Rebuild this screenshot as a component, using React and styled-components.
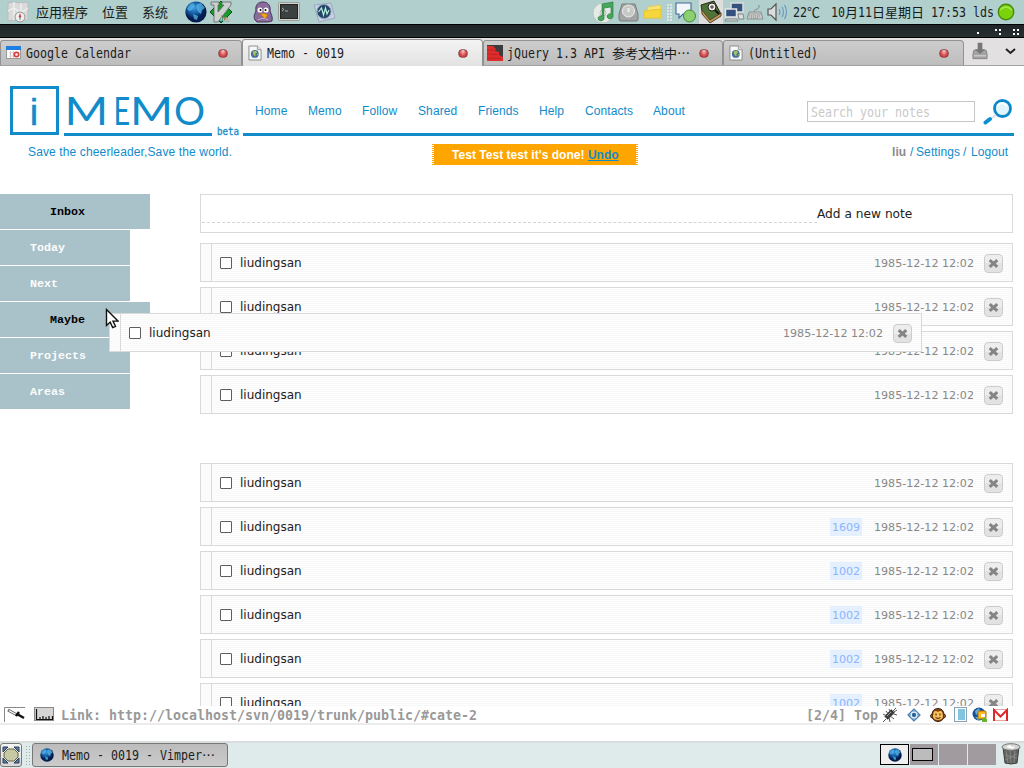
import React from 'react';
import styled, { createGlobalStyle, css } from 'styled-components';

const Global = createGlobalStyle`
  *{box-sizing:border-box}
  html,body{margin:0;padding:0;background:#fff;overflow:hidden}
  a{color:inherit;text-decoration:none}
`;
const blue = '#118bca';

const Desktop = styled.div`
  position:relative;width:1024px;height:768px;overflow:hidden;display:flex;flex-direction:column;
  font-family:"Liberation Sans","Noto Sans CJK SC",sans-serif;font-size:12px;background:#fff;
`;
const mono = css`font-family:"DejaVu Sans Mono","Noto Sans CJK SC",monospace;`;
/* Narrow monospace label: glyphs are squeezed to a 7px advance. */
const Narrow = styled.span`
  ${mono} display:block;white-space:pre;width:${p => p.$w}px;font-size:14px;line-height:20px;color:${p => p.$c || '#1c1c1c'};
  flex:none;
  & > span{display:inline-block;transform:scaleX(.8305);transform-origin:0 50%}
`;
const Label = ({ w, c, children }) => <Narrow $w={w} $c={c}><span>{children}</span></Narrow>;
const Cjk = styled.span`font:13px/20px "Noto Sans CJK SC",sans-serif;white-space:nowrap;color:#161a1a;flex:none;width:${p => p.$w}px;`;
const Icon = styled.svg`display:block;flex:none;margin-left:${p => p.$l || 0}px;`;

const TopPanel = styled.header`height:24px;flex:none;background:#b0cfcd;display:flex;align-items:center;padding-left:7px;`;
const Spacer = styled.div`width:${p => p.$w}px;flex:none;`;
const TitleBar = styled.div`
  height:14px;flex:none;background:linear-gradient(#1e2526,#293032);border-top:1px solid #000;border-bottom:1px solid #000;
  display:flex;justify-content:flex-end;padding-right:5px;align-items:center;
`;
const TabBar = styled.nav`height:28px;flex:none;background:#e3e0e1;display:flex;align-items:flex-end;border-bottom:1px solid #a2a2a2;`;
const Tab = styled.div`
  width:${p => p.$w}px;height:${p => p.$active ? 27 : 25}px;display:flex;align-items:center;padding:0 0 0 ${p => p.$pad || 5}px;
  border:1px solid #929292;border-bottom:0;border-radius:3px 4px 0 0;margin-bottom:${p => p.$active ? -1 : 0}px;
  background:${p => p.$active ? 'linear-gradient(#f4f4f4,#e2e2e2)' : 'linear-gradient(#cdcdcd,#bdbdbd)'};
`;
const Close = styled.i`
  width:10px;height:9px;border-radius:5px;border:1px solid #94474b;margin-left:auto;margin-right:${p => p.$r || 13}px;
  background:radial-gradient(ellipse at 50% 15%,#f0b5b5 10%,#dd6565 45%,#c43237 75%,#d9605f);
`;

const Page = styled.main`height:640px;flex:none;overflow:hidden;`;
const Header = styled.div`height:70px;display:flex;padding:20px 10px 0;`;
const Logo = styled.svg`width:233px;height:50px;display:block;flex:none;`;
const HeadRight = styled.div`width:771px;height:50px;border-bottom:3px solid ${blue};display:flex;padding-left:12px;`;
const Nav = styled.nav`display:grid;grid-template-columns:53px 54px 56px 60px 61px 46px 68px 154px;line-height:50px;color:${blue};letter-spacing:.1px;`;
const Search = styled.div`
  width:168px;height:21px;margin-top:15px;border:1px solid #c5c5c5;padding-left:3px;line-height:0;
`;
const SubHeader = styled.div`height:58px;display:flex;padding:8px 0 0 28px;line-height:16px;color:${blue};`;
const Tagline = styled.div`width:404px;letter-spacing:.13px;`;
const Notice = styled.div`
  width:206px;height:21px;background:linear-gradient(90deg,transparent 2px,#ffa500 2px 204px,transparent 204px),repeating-linear-gradient(#ffa500 0 1px,#fff 1px 2px);
  color:#fff;font-weight:bold;line-height:22px;padding-left:20px;white-space:nowrap;letter-spacing:.03px;
  a{color:${blue};text-decoration:underline}
`;
const User = styled.div`margin-left:254px;white-space:pre;letter-spacing:.1px;display:grid;grid-template-columns:18px 6px 47px 8px 40px;b{color:#8b8b8b}`;
const Body = styled.div`display:flex;`;
const Side = styled.nav`width:200px;display:flex;flex-direction:column;gap:1px;`;
const SideItem = styled.a`
  height:35px;width:${p => p.$on ? 150 : 130}px;padding-left:${p => p.$on ? 50 : 30}px;background:#a9c1c9;
  font:bold 11.67px/37px "Liberation Mono",monospace;color:${p => p.$on ? '#000' : '#fbfdfd'};
`;
const Notes = styled.section`width:813px;`;
const AddBox = styled.div`
  height:39px;border:1px solid #d9d9d9;margin-bottom:10px;display:flex;padding-left:1px;
  font:12.2px/39px "DejaVu Sans",sans-serif;color:#222;
`;
const Entry = styled.div`width:615px;height:28px;border-bottom:1px dashed #d5d5d5;`;
const Row = styled.div`
  height:39px;width:813px;margin-bottom:5px;border:1px solid #d9d9d9;display:flex;align-items:center;
  font:12px/18px "DejaVu Sans",sans-serif;color:#222;
  background:repeating-linear-gradient(#fefefe 0 1px,#f8f8f8 1px 2px);
  ${p => p.$dragged && css`position:absolute;left:109px;top:313px;`}
`;
const Gap = styled.div`height:44px;`;
const Handle = styled.i`width:11px;height:37px;background:#fbfbfb;border-right:1px solid #d9d9d9;`;
const Check = styled.i`width:12px;height:12px;border:1px solid #5e5e5e;border-radius:1px;background:#fff;margin:1px 8px 0;`;
const Name = styled.span`flex:1;`;
const Count = styled.span`
  width:32px;height:18px;line-height:20px;background:#e5f0fe;color:#8cb4ff;font-size:11.1px;text-align:center;margin-right:12px;
`;
const Time = styled.time`font-size:11.1px;line-height:18px;padding-top:2px;color:#888;width:100px;white-space:nowrap;`;
const Del = styled.button`
  width:19px;height:19px;margin:2px 9px 0 10px;padding:0;border:1px solid #ccc;border-radius:4px;
  background:linear-gradient(#ededed 50%,#e2e2e2 50%);display:flex;align-items:center;justify-content:center;
`;

const Status = styled.div`height:19px;flex:none;border-bottom:2px solid #ececec;display:flex;align-items:center;padding-left:4px;background:#fff;`;
const StatusText = styled.span`
  ${mono} display:block;flex:none;font-size:14px;font-weight:bold;color:#999;white-space:pre;width:${p => p.$w}px;line-height:18px;
  & > span{display:inline-block;transform:scaleX(.949);transform-origin:0 50%}
`;
const Bottom = styled.footer`
  height:27px;margin-top:auto;flex:none;background:#dfeaea;border-top:2px solid #dadddd;display:flex;align-items:flex-start;
`;
const PanelButton = styled.div`
  width:${p => p.$w}px;height:24px;border:1px solid #777;border-radius:3px;display:flex;align-items:center;flex:none;
  background:${p => p.$pressed ? 'linear-gradient(#bcbcbc,#cbcbcb)' : 'linear-gradient(#f6f6f6,#d8d8d8)'};
  padding-left:${p => p.$pressed ? 7 : 1}px;
  & > ${Narrow}{margin-left:8px}
`;
const Grip = styled.i`width:6px;height:20px;margin:2px 1px 0 3px;flex:none;background:radial-gradient(circle,#a5aeae 0.7px,transparent 1px) 0 0/3px 3px;`;
const Workspaces = styled.div`display:flex;gap:1px;width:118px;flex:none;`;
const Workspace = styled.div`
  width:${p => p.$on ? 29 : 28}px;height:21px;margin-top:1px;background:${p => p.$on ? '#efefef' : '#a19b9f'};
  outline:${p => p.$on ? '1px solid #000' : 'none'};outline-offset:-1px;display:flex;align-items:center;justify-content:center;
`;
const MiniWindow = styled.i`width:21px;height:13px;border:1px solid #000;background:#bcbcbc;margin-right:3px;`;

const Globe = ({ s = 22, l }) => (
  <Icon $l={l} width={s} height={s} viewBox="0 0 22 22">
    <defs><radialGradient id={`globe${s}`} cx=".4" cy=".3"><stop offset="0" stopColor="#3f9be0" /><stop offset=".6" stopColor="#125aa0" /><stop offset="1" stopColor="#051c50" /></radialGradient></defs>
    <circle cx="11" cy="11" r="10.6" fill={`url(#globe${s})`} />
    <path d="M2 8Q4 3 8 2l2 3-3 4-3 1zM12 3l4-1 4 5-3 2-1 4-3-2-2-5zM8 13l5 2-1 4-3-1z" fill="#56b4e2" opacity=".75" />
  </Icon>
);
const PageIcon = () => (
  <Icon width="14" height="16" viewBox="0 0 15 17">
    <path d="M1 1h9l4 4v11H1z" fill="#f8f8f8" stroke="#858a86" /><path d="M10 1v4h4" fill="#ddd" stroke="#999" />
    <circle cx="7.3" cy="9.5" r="4.2" fill="#476f9d" /><path d="M5 7l3-1 2 2-2 1v3l-2-1zM9 11l2-2v2z" fill="#abc554" />
  </Icon>
);
const Cross = () => (
  <svg width="11" height="11" viewBox="0 0 11 11"><path d="M1.7 2.2l7.6 6.6M9.300 2.2L1.700 8.8" stroke="#858585" strokeWidth="3.1" /></svg>
);

function Note({ count, dragged }) {
  return (
    <Row $dragged={dragged}>
      <Handle /><Check /><Name>liudingsan</Name>
      {count && <Count>{count}</Count>}
      <Time>1985-12-12 12:02</Time><Del><Cross /></Del>
    </Row>
  );
}

function Top() {
  return (
    <TopPanel>
      <Icon width="22" height="22" viewBox="0 0 22 22">
        <path d="M1 2l6-1 7 1 7-1v18l-7 1-7-1-6 1z" fill="#d9dad9" stroke="#b9bcbc" /><path d="M7 1v18M14 2v17M1 10l6-3 7 5 7-5" stroke="#f3f3f3" fill="none" strokeWidth="1.2" />
        <circle cx="13" cy="16" r="5" fill="#eee" stroke="#8d9797" /><path d="M13 12l1.3 4h-2.6z" fill="#d33" /><path d="M13 20l1-4h-2z" fill="#888" />
      </Icon>
      <Spacer $w={7} /><Cjk $w={66}>应用程序</Cjk><Cjk $w={40}>位置</Cjk><Cjk $w={43}>系统</Cjk>
      <Globe />
      <Icon $l={2} width="24" height="24" viewBox="0 0 24 24">
        <path d="M12 1l11 11-11 11L1 12z" fill="#169c2b" stroke="#064d11" />
        <path d="M2 2h8v3H9v7l6-7h-2V2h9v3L9 22H5V5H2z" fill="#ccd0cf" stroke="#626766" strokeWidth=".8" />
        <text x="11" y="21" fontFamily="Liberation Serif" fontStyle="italic" fontWeight="bold" fontSize="9" fill="#f5f5f5" stroke="#333" strokeWidth=".25">im</text>
      </Icon>
      <Icon $l={19} width="22" height="22" viewBox="0 0 22 22">
        <path d="M3 19C1 15 3 13 4 10 3 4 6 1 11 1s8 4 7 9c1 3 3 6 2 10l-4 1H5z" fill="#896b9c" stroke="#4b335c" />
        <ellipse cx="8" cy="9" rx="2.5" ry="2.6" fill="#fff" /><ellipse cx="14" cy="9" rx="2.5" ry="2.6" fill="#fff" /><circle cx="8.5" cy="9" r="1" /><circle cx="13.5" cy="9" r="1" />
        <path d="M8 13l4-1 4 2-3 4z" fill="#f2a31d" stroke="#a86208" strokeWidth=".6" /><path d="M6 19c3-2 7-2 10 0" fill="none" stroke="#c6b0d2" />
      </Icon>
      <Icon $l={4} width="22" height="20" viewBox="0 0 22 20">
        <rect x=".5" y=".5" width="21" height="18" rx="1" fill="#d4d5d2" stroke="#9b9d99" /><rect x="2.5" y="2.5" width="17" height="14" fill="#3b4040" stroke="#222" /><path d="M4 6l2 1.5L4 9M7 9h3" stroke="#aaa" fill="none" />
      </Icon>
      <Icon $l={13} width="23" height="21" viewBox="0 0 23 21">
        <path d="M1 3l17-2 4 15-16 4z" fill="#c8d0e2" stroke="#9ba9c5" /><circle cx="11" cy="9.5" r="7" fill="#214765" stroke="#8b9bb4" />
        <path d="M5.5 10l3-4 2 7 2-7 1.5 6 2-4" stroke="#b8efe0" strokeWidth="1.2" fill="none" />
      </Icon>
      <Spacer $w={256} />
      <Icon width="23" height="23" viewBox="0 0 23 23">
        <circle cx="11" cy="12" r="10" fill="#e6eae6" stroke="#b9c6c3" /><circle cx="11" cy="12" r="3" fill="#fff" stroke="#bbb" />
        <path d="M10 3l11-2v14a3 2.500 0 1 1-2-2V6l-7 1v10a3 2.500 0 1 1-2-2z" fill="#47a85c" stroke="#207239" strokeWidth=".6" />
      </Icon>
      <Icon $l={3} width="21" height="20" viewBox="0 0 21 20">
        <path d="M4 2h13l3 10v5q0 2-2 2H3q-2 0-2-2v-5z" fill="#a2a5a3" stroke="#787c7a" /><circle cx="10.5" cy="9" r="6" fill="#c7c9c6" stroke="#eee" /><path d="M10.500 6v4" stroke="#eee" strokeWidth="2" />
      </Icon>
      <Icon $l={4} width="20" height="16" viewBox="0 0 20 16"><path d="M5 3l12-2 2 6-16 2z" fill="#f8e47a" stroke="#e6cd52" /><path d="M1 7l17-2v9H1z" fill="#f5d63c" stroke="#e8c52e" /></Icon>
      <Icon $l={3} width="7" height="19"><path d="M2 1v18M5 1v18" stroke="#dae9e7" strokeWidth="2" strokeDasharray="2 1" /></Icon>
      <Icon $l={2} width="22" height="22" viewBox="0 0 22 22">
        <path d="M1 2h15v11H8l-4 4v-4H1z" fill="#f2f6fa" stroke="#3e6a9b" strokeWidth="1.1" /><circle cx="14.500" cy="15" r="6" fill="#8bcf70" stroke="#438b32" />
      </Icon>
      <Icon $l={2} width="24" height="24" viewBox="0 0 24 24">
        <rect width="24" height="24" fill="#dfdede" /><path d="M2 5l13-4 7 13-11 7L3 11z" fill="#4d7337" stroke="#282e18" /><path d="M3 10l8 10 11-7v3l-11 7L3 14z" fill="#bf9960" stroke="#594525" />
        <circle cx="13" cy="7" r="4" fill="#f0f0e8" stroke="#222" /><path d="M16 10l4 4" stroke="#111" strokeWidth="2" /><path d="M11 7h4M13 5v4" stroke="#333" />
      </Icon>
      <Icon $l={1} width="21" height="21" viewBox="0 0 21 21">
        <rect x="7" y="1" width="12" height="9" fill="#34507d" stroke="#ddd" strokeWidth="1.5" /><rect x="1.500" y="7" width="11" height="8" fill="#34507d" stroke="#e5e5e5" strokeWidth="1.5" /><path d="M2 17h11l1 2H1zM14 12h5l1 5h-5z" fill="#ddd" stroke="#777" strokeWidth=".8" />
      </Icon>
      <Icon $l={1} width="18" height="17" viewBox="0 0 18 17"><path d="M8 8C8 4 14 7 13 1" fill="none" stroke="#888" /><path d="M3 8h12l2 7H1z" fill="#c7cac8" stroke="#8e9391" /><path d="M3.500 10h11M3 12h12M5 14h8" stroke="#7f8583" strokeDasharray="1 1" /></Icon>
      <Icon $l={3} width="22" height="20" viewBox="0 0 22 20"><path d="M1 7h3l5-5v16l-5-5H1z" fill="#ddd" stroke="#555" strokeWidth="1.2" /><path d="M12 7q2 3 0 6M15 5q3 5 0 10M17.500 3q4 7 0 14" fill="none" stroke="#709bbf" strokeWidth="1.2" /></Icon>
      <Spacer $w={4} /><Label w={14}>22</Label><Cjk $w={24}>℃</Cjk>
      <Label w={14}>10</Label><Cjk $w={13}>月</Cjk><Label w={14}>11</Label><Cjk $w={59}>日星期日</Cjk>
      <Label w={42}>17:53</Label><Label w={24}>lds</Label>
      <Icon width="18" height="18" viewBox="0 0 18 18"><circle cx="9" cy="9" r="7.700" fill="#7ad20d" stroke="#448b0b" strokeWidth="1.4" /><path d="M3 7q6-6 12 0" fill="none" stroke="#a8e851" strokeWidth="1.5" /></Icon>
    </TopPanel>
  );
}

export default function App() {
  return (
    <Desktop>
      <Global />
      <Top />
      <TitleBar>
        <svg width="42" height="10"><path d="M0 6h2v2H0zM18 3h2v2h-2zM22 3h2v2h-2zM22 7h2v2h-2zM36 3h2v2h-2zM40 3h2v2h-2zM36 7h2v2h-2zM40 7h2v2h-2z" fill="#fff" /></svg>
      </TitleBar>
      <TabBar>
        <Tab $w={242}>
          <Icon width="16" height="16" viewBox="0 0 16 16"><rect x=".5" y="1.500" width="14" height="12" fill="#fff" stroke="#999" /><rect x="0" y="1" width="15" height="4" fill="#1f7fe0" /><path d="M3 8h6M3 11h6M4.500 6v7M7.500 6v7" stroke="#ccc" /><circle cx="10.500" cy="9.500" r="2.200" fill="#fff" stroke="#d83c3c" strokeWidth="1.7" /></Icon>
          <Spacer $w={4} /><Label w={110}>Google Calendar</Label><Close />
        </Tab>
        <Tab $w={241} $active><PageIcon /><Spacer $w={5} /><Label w={110}>Memo - 0019</Label><Close $r={14} /></Tab>
        <Tab $w={240} $pad={3}>
          <Icon width="16" height="16" viewBox="0 0 16 16"><rect width="16" height="16" fill="#3c3c3c" /><path d="M0 1h6l3 3-1 2 4 1v3l4 2v4H0z" fill="#e02b2b" /><path d="M0 5h8M0 9l11 .5M0 13l14 .5" stroke="#b82525" /></Icon>
          <Spacer $w={4} /><Label w={105}>jQuery 1.3 API </Label><Cjk $w={78}>参考文档中⋯</Cjk><Close />
        </Tab>
        <Tab $w={241}><PageIcon /><Spacer $w={5} /><Label w={110}>(Untitled)</Label><Close $r={14} /></Tab>
        <Icon $l={8} width="16" height="24" viewBox="0 0 17 24"><path d="M2 9h13l1 4v5H1v-5z" fill="#a3a3a3" stroke="#858585" /><path d="M6 1h5v7h3l-5.500 5L3 8h3z" fill="#777" /><path d="M2 15h13" stroke="#ddd" /></Icon>
        <Icon $l={17} width="12" height="20"><path d="M1 4l4.500 4L10 4" fill="none" stroke="#222" strokeWidth="2" /></Icon>
      </TabBar>

      <Page>
        <Header>
          <Logo viewBox="0 0 233 50">
            <rect x="1.500" y="1.500" width="46" height="46" fill="#fff" stroke={blue} strokeWidth="3" />
            <text x="20" y="38.500" fontFamily="Liberation Sans" fontSize="36" fill={blue} stroke={blue} strokeWidth=".6">i</text>
            <g fontFamily="Lato" fontSize="38" fill={blue}>
              <text transform="translate(54.500 38.500) scale(1.24 1)">M</text>
              <text transform="translate(103.500 38.500) scale(.76 1)">E</text>
              <text transform="translate(120 38.500) scale(1.22 1)">M</text>
              <text transform="translate(164 38.500) scale(1.02 1)">O</text>
            </g>
            <path d="M54 48.500h148" stroke={blue} strokeWidth="3" />
            <text x="207" y="49" textLength="22" lengthAdjust="spacingAndGlyphs" fontFamily="DejaVu Sans Mono" fontSize="10.500" fill={blue} stroke={blue} strokeWidth=".3">beta</text>
          </Logo>
          <HeadRight>
            <Nav><a>Home</a><a>Memo</a><a>Follow</a><a>Shared</a><a>Friends</a><a>Help</a><a>Contacts</a><a>About</a></Nav>
            <Search><Label w={130} c="#c9c9c9">Search your notes</Label></Search>
            <Icon $l={8} width="30" height="28" viewBox="0 0 30 28" style={{ marginTop: 12 }}>
              <circle cx="19.500" cy="10.500" r="8" fill="#e2f5fd" stroke="#0b87cc" strokeWidth="2.800" /><path d="M14 8q5-6 10 0" stroke="#fff" strokeWidth="2" fill="none" />
              <path d="M13 17l-4 3" stroke="#dde" strokeWidth="2" /><path d="M7 21l-4.500 3.500" stroke="#0b8fd4" strokeWidth="4" strokeLinecap="round" />
            </Icon>
          </HeadRight>
        </Header>
        <SubHeader>
          <Tagline>Save the cheerleader,Save the world.</Tagline>
          <Notice>Test Test test it's done! <a>Undo</a></Notice>
          <User><b>liu</b><span>/</span><a>Settings</a><span>/</span><a>Logout</a></User>
        </SubHeader>
        <Body>
          <Side>
            <SideItem $on>Inbox</SideItem><SideItem>Today</SideItem><SideItem>Next</SideItem>
            <SideItem $on>Maybe</SideItem><SideItem>Projects</SideItem><SideItem>Areas</SideItem>
          </Side>
          <Notes>
            <AddBox><Entry />Add a new note</AddBox>
            <Note /><Note /><Note /><Note /><Gap /><Note />
            <Note count="1609" /><Note count="1002" /><Note count="1002" /><Note count="1002" /><Note count="1002" />
          </Notes>
        </Body>
      </Page>

      <Status>
        <Icon width="22" height="15" viewBox="0 0 22 15"><path d="M.500 15V.500H21" fill="none" stroke="#888" /><path d="M4 3l9 5" stroke="#666" strokeWidth="3" /><path d="M5 3.500l7 4" stroke="#fff" strokeWidth="1.200" /><path d="M12 9l3-4M13 7l7 4" stroke="#111" strokeWidth="2.500" /></Icon>
        <Icon $l={8} width="21" height="15" viewBox="0 0 21 15"><rect x=".500" y=".500" width="19" height="13" fill="#d5d5d5" stroke="#888" /><path d="M2.500 2v10.500h16V9M6 12v-2M9 12V9M12 12v-2M15 12v-3" stroke="#111" fill="none" strokeWidth="1.200" /></Icon>
        <Spacer $w={6} /><StatusText $w={745}><span>Link: http://localhost/svn/0019/trunk/public/#cate-2</span></StatusText><StatusText $w={76}><span>[2/4] Top</span></StatusText>
        <Icon width="16" height="16" viewBox="0 0 16 16"><path d="M4 11l7-7" stroke="#333" strokeWidth="5" /><path d="M1 7l6 3 1 5M4 4l3 4 5 4M7 2l2 4 6 2M1 15l3-3M11 4l3-3M12 5l3-2" stroke="#555" fill="none" /><path d="M5 9l4-4" stroke="#aaa" /></Icon>
        <Icon $l={9} width="14" height="14" viewBox="0 0 14 14"><path d="M7 .700L13.300 7 7 13.300.700 7z" fill="#6d9ecb" stroke="#356b9d" /><circle cx="7" cy="7" r="2.800" fill="#2c6298" stroke="#e1eefb" strokeWidth="1.300" /></Icon>
        <Icon $l={9} width="16" height="16" viewBox="0 0 16 16"><circle cx="2.500" cy="9" r="2" fill="#c98d3a" stroke="#4b280e" /><circle cx="13.500" cy="9" r="2" fill="#c98d3a" stroke="#4b280e" /><path d="M8 1.500c5 0 6 4 6 7s-2 6-6 6-6-3-6-6 1-7 6-7z" fill="#7d4514" stroke="#3c210b" /><path d="M8 5c2-2 5-1 4.500 2 1.500 3-.5 6-4.500 6s-6-3-4.500-6C3 4 6 3 8 5z" fill="#f8c15c" /><path d="M6 6.500v2M10 6.500v2M5.500 10.500q2.500 2 5 0" stroke="#3b1905" fill="none" /></Icon>
        <Icon $l={8} width="13" height="15" viewBox="0 0 13 15"><rect x=".500" y=".500" width="12" height="14" fill="#f8fcfe" stroke="#8ca1b3" /><path d="M4 2h7v11H4z" fill="#82c5df" /></Icon>
        <Icon $l={5} width="16" height="16" viewBox="0 0 16 16"><circle cx="7" cy="7" r="6.500" fill="#174f99" /><path d="M3 4l4-3 1 4-4 3zM3 10h4v4z" fill="#65b0d6" /><rect x="6" y="4" width="8" height="8" rx="1" fill="#f8ba25" stroke="#b06c0d" /><path d="M9 7h4v3H9z" fill="#fff" /><path d="M10 12l3-2v2h2v3h-5z" fill="#68b32e" /></Icon>
        <Icon $l={4} width="17" height="14" viewBox="0 0 17 14"><path d="M1.500 1.500h14v11h-14z" fill="#fff" stroke="#e5a5a5" /><path d="M2 13V2l6.500 6.500L15 2v11" fill="none" stroke="#df2727" strokeWidth="2" /></Icon>
      </Status>

      <Bottom>
        <PanelButton $w={22}>
          <Icon width="18" height="18" viewBox="0 0 18 18"><path d="M1 1h5L1 6zM17 1v5l-5-5zM1 17v-5l5 5zM17 17h-5l5-5z" fill="#607a9f" stroke="#263c5b" /><path d="M6 3h6l4 4v4l-4 4H6l-4-4V7z" fill="#c6c9a1" stroke="#62664a" /></Icon>
        </PanelButton>
        <Grip />
        <PanelButton $w={196} $pressed><Globe s={14} /><Label w={140}>Memo - 0019 - Vimper</Label><Cjk $w={14}>⋯</Cjk></PanelButton>
        <Spacer $w={652} />
        <Workspaces>
          <Workspace $on><Globe s={14} /></Workspace><Workspace><MiniWindow /></Workspace><Workspace /><Workspace />
        </Workspaces>
        <Icon $l={3} width="20" height="22" viewBox="0 0 20 22"><path d="M2 4h16l-2 16q-6 2-12 0z" fill="#606260" stroke="#3f4140" /><path d="M5 8l2 12M9 8l1 12M14 8l-1 12M4 12l12 3M4 17l12-6" stroke="#888a88" /><ellipse cx="10" cy="4" rx="9" ry="3.300" fill="#d4d5d2" stroke="#777" /><path d="M5 4l4-2 2 2 3-1-2 3z" fill="#fff" /></Icon>
      </Bottom>

      <Note dragged />
      <Icon width="14" height="21" viewBox="0 0 14 21" style={{ position: 'absolute', left: 105, top: 308 }}>
        <path d="M1.500 1.500v16l3.700-3.400 2.500 5.500 2.800-1.300-2.500-5.200h5z" fill="#fff" stroke="#111" strokeWidth="1.400" />
      </Icon>
    </Desktop>
  );
}
